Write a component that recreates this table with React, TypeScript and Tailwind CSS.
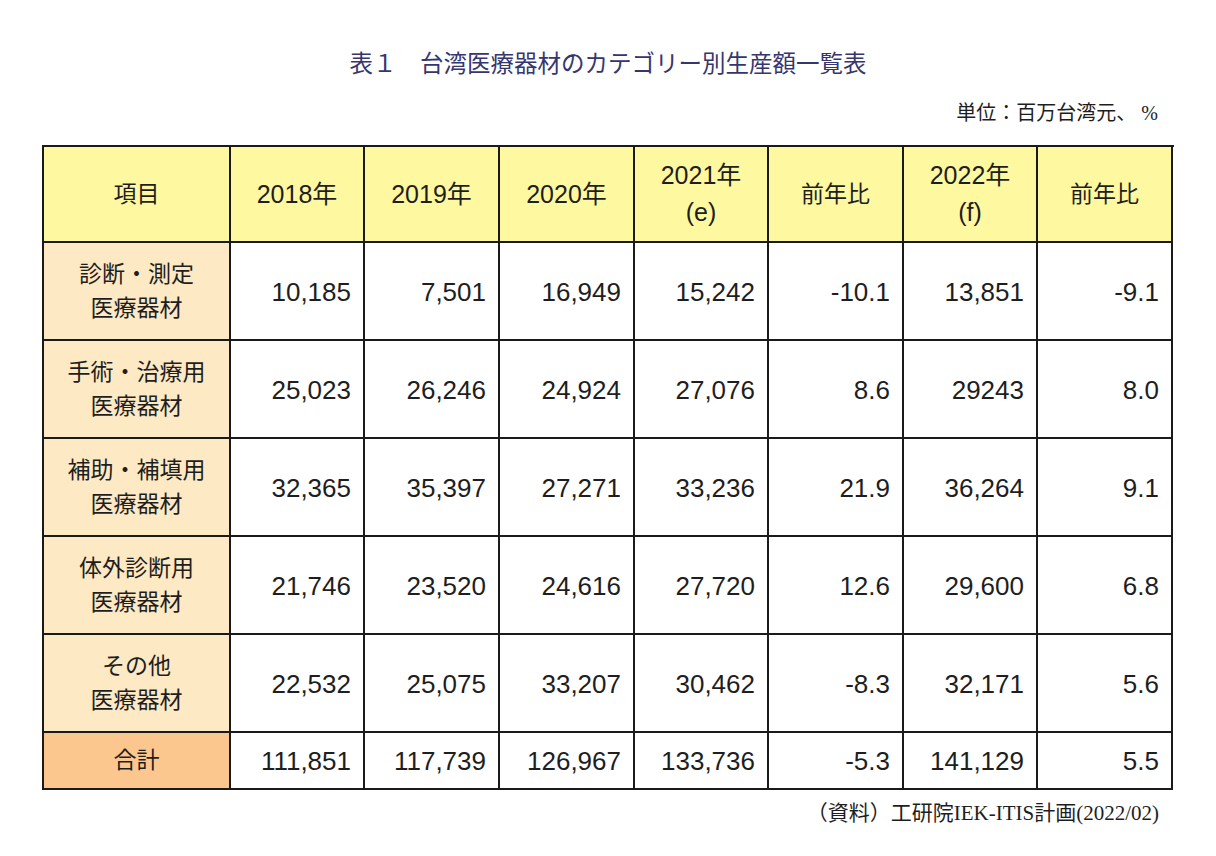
const header = ["項目", "2018年", "2019年", "2020年", "2021年\n(e)", "前年比", "2022年\n(f)", "前年比"];

const rows = [
  { label: ["診断・測定", "医療器材"], values: ["10,185", "7,501", "16,949", "15,242", "-10.1", "13,851", "-9.1"] },
  { label: ["手術・治療用", "医療器材"], values: ["25,023", "26,246", "24,924", "27,076", "8.6", "29243", "8.0"] },
  { label: ["補助・補填用", "医療器材"], values: ["32,365", "35,397", "27,271", "33,236", "21.9", "36,264", "9.1"] },
  { label: ["体外診断用", "医療器材"], values: ["21,746", "23,520", "24,616", "27,720", "12.6", "29,600", "6.8"] },
  { label: ["その他", "医療器材"], values: ["22,532", "25,075", "33,207", "30,462", "-8.3", "32,171", "5.6"] },
];

const total = ["111,851", "117,739", "126,967", "133,736", "-5.3", "141,129", "5.5"];

const sans = "font-['Liberation_Sans','Noto_Sans_CJK_JP',sans-serif]";

const App = () => {
  return (
    <div className={`w-[1216px] h-[856px] bg-white text-[#1e1e1e] px-[42px] pt-[48px] ${sans}`}>
      <div className="text-center text-[23.5px] leading-[28px] text-[#36366f] font-['Noto_Sans_CJK_JP',sans-serif]">
        表１　台湾医療器材のカテゴリー別生産額一覧表
      </div>
      <div className="mt-[25px] pr-[16px] text-right text-[20px] leading-[24px] font-['Liberation_Serif','Noto_Sans_CJK_JP',serif]">
        単位：百万台湾元、 %
      </div>

      <div className="mt-[20px] grid grid-cols-[187px_134px_135px_135px_134px_135px_134px_135px] border-l-2 border-t-2 border-[#1a1a1a]">
        {header.map((h, i) => (
          <div
            key={i}
            className={`h-[96px] flex flex-col items-center justify-center bg-[#fef9a0] border-r-2 border-b-2 border-[#1a1a1a] leading-[37px] ${
              /\d/.test(h) ? "text-[25px]" : "text-[23px]"
            }`}
          >
            {h.split("\n").map((line, j) => (
              <span key={j}>{line}</span>
            ))}
          </div>
        ))}

        {rows.map((r, i) => (
          <>
            <div
              key={"l" + i}
              className="h-[98px] flex flex-col items-center justify-center bg-[#fde9c4] border-r-2 border-b-2 border-[#1a1a1a] text-[23px] leading-[34px]"
            >
              {r.label.map((line, j) => (
                <span key={j}>{line}</span>
              ))}
            </div>
            {r.values.map((v, j) => (
              <div
                key={i + "-" + j}
                className="h-[98px] flex items-center justify-end pr-[12px] pt-[3px] border-r-2 border-b-2 border-[#1a1a1a] text-[26px]"
              >
                {v}
              </div>
            ))}
          </>
        ))}

        <div className="h-[57px] flex items-center justify-center bg-[#fcc78e] border-r-2 border-b-2 border-[#1a1a1a] text-[23px]">
          合計
        </div>
        {total.map((v, j) => (
          <div
            key={"t" + j}
            className="h-[57px] flex items-center justify-end pr-[12px] pt-[2px] border-r-2 border-b-2 border-[#1a1a1a] text-[26px]"
          >
            {v}
          </div>
        ))}
      </div>

      <div className="mt-[11px] pr-[15px] text-right text-[21px] leading-[24px] font-['Liberation_Serif','Noto_Sans_CJK_JP',serif]">
        （資料）工研院IEK-ITIS計画(2022/02)
      </div>
    </div>
  );
};

export default App;
